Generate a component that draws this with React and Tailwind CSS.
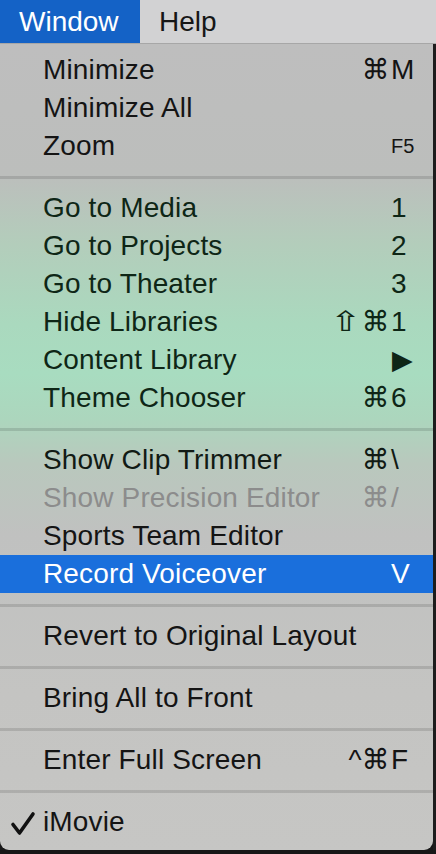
import React from "react";

const FONT = { fontFamily: '"Liberation Sans", "DejaVu Sans", Arial, sans-serif' };

function Check() {
  return (
    <svg width="26" height="26" viewBox="0 0 26 26" className="absolute left-[10px] top-[7px]">
      <path d="M3 14.5 L9.5 23 L23 4" fill="none" stroke="#111" strokeWidth="3.6" strokeLinecap="round" strokeLinejoin="round" />
    </svg>
  );
}

function Row({ label, mods = "", keyc = "", disabled, active, color = "text-[#141414]", small, checked }) {
  const txt = active ? "text-white" : disabled ? "text-[#8c8c8c]" : color;
  return (
    <div className={`relative flex items-center h-[38px] pl-[43px] text-[28px] leading-[38px] tracking-[0.15px] ${txt} ${active ? "bg-[#1a6fdc]" : ""}`}>
      {checked && <Check />}
      <span className="flex-1 whitespace-nowrap">{label}</span>
      <span className="whitespace-nowrap text-right">{mods}</span>
      <span className={`w-[43px] pl-[1px] whitespace-nowrap ${small ? "text-[20px]" : ""}`}>{keyc}</span>
    </div>
  );
}

function Sep() {
  return (
    <div className="h-[24px] flex flex-col justify-center">
      <div className="h-[3px] bg-black/[0.12]" />
    </div>
  );
}

export default function App() {
  const green = "text-[#0e2616]";
  return (
    <div className="w-[436px] h-[854px] bg-[#171717] overflow-hidden flex flex-col" style={FONT}>
      <div className="h-[44px] flex bg-[#d2d2d3] border-b border-[#a7a7a7] text-[28px] leading-[43px]">
        <div className="w-[140px] bg-[#1462c6] text-white pl-[19px]">Window</div>
        <div className="pl-[19px] text-[#161616]">Help</div>
      </div>
      <div className="flex">
        <div className="w-[433px] h-[806px] rounded-b-[9px] pt-[7px] bg-[linear-gradient(180deg,#bebebe_0px,#bcbebc_130px,#b3cdbb_200px,#aad9be_280px,#a8dcc0_330px,#acd6bd_375px,#b9c8bd_420px,#c0c1c0_490px,#c4c4c2_650px,#c6c6c4_806px)]">
          <Row label="Minimize" mods="⌘" keyc="M" />
          <Row label="Minimize All" />
          <Row label="Zoom" keyc="F5" small />
          <Sep />
          <Row label="Go to Media" keyc="1" color={green} />
          <Row label="Go to Projects" keyc="2" color={green} />
          <Row label="Go to Theater" keyc="3" color={green} />
          <Row label="Hide Libraries" mods={<><span className="inline-block scale-x-[1.35] mr-[4px]">⇧</span>⌘</>} keyc="1" color={green} />
          <Row label="Content Library" keyc={<span className="text-[27px] relative left-[1px]">▶</span>} color={green} />
          <Row label="Theme Chooser" mods="⌘" keyc="6" color={green} />
          <Sep />
          <Row label="Show Clip Trimmer" mods="⌘" keyc="\" color="text-[#111a14]" />
          <Row label="Show Precision Editor" mods="⌘" keyc="/" disabled />
          <Row label="Sports Team Editor" />
          <Row label="Record Voiceover" keyc="V" active />
          <Sep />
          <Row label="Revert to Original Layout" />
          <Sep />
          <Row label="Bring All to Front" />
          <Sep />
          <Row label="Enter Full Screen" mods="^⌘" keyc="F" />
          <Sep />
          <Row label="iMovie" checked />
        </div>
        <div className="flex-1 bg-[#1d1d1d]" />
      </div>
    </div>
  );
}
